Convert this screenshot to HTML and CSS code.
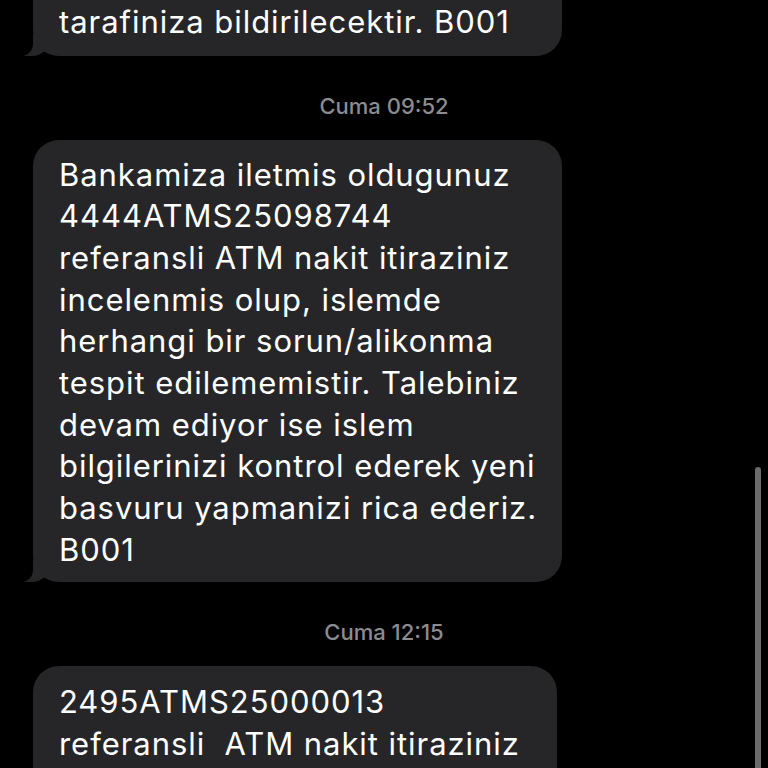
FILE: index.html
```html
<!DOCTYPE html>
<html lang="tr">
<head>
<meta charset="utf-8">
<title>Mesajlar</title>
<link rel="stylesheet" href="styles.css">
</head>
<body>
<main class="thread">
  <div class="bubble bubble--tail bubble--first">
    <span class="line">tarafiniza bildirilecektir. B001</span>
  </div>

  <div class="stamp">Cuma 09:52</div>

  <div class="bubble bubble--tail">
    <span class="line">Bankamiza iletmis oldugunuz</span>
    <span class="line">4444ATMS25098744</span>
    <span class="line">referansli ATM nakit itiraziniz</span>
    <span class="line">incelenmis olup, islemde</span>
    <span class="line">herhangi bir sorun/alikonma</span>
    <span class="line">tespit edilememistir. Talebiniz</span>
    <span class="line">devam ediyor ise islem</span>
    <span class="line">bilgilerinizi kontrol ederek yeni</span>
    <span class="line">basvuru yapmanizi rica ederiz.</span>
    <span class="line">B001</span>
  </div>

  <div class="stamp">Cuma 12:15</div>

  <div class="bubble bubble--narrow">
    <span class="line">2495ATMS25000013</span>
    <span class="line">referansli&nbsp; ATM nakit itiraziniz</span>
    <span class="line">incelenmis olup, islemde</span>
  </div>
</main>
<div class="scrollbar"></div>
</body>
</html>
```
FILE: styles.css
```css
html, body {
  margin: 0;
  padding: 0;
  background: #000;
  height: 100%;
  overflow: hidden;
}

body {
  font-family: Inter, "Noto Sans", "Liberation Sans", sans-serif;
  color: #fff;
}

.thread {
  display: flex;
  flex-direction: column;
  align-items: flex-start;
  padding-left: 33px;
}

.bubble {
  position: relative;
  box-sizing: border-box;
  width: 529px;
  background: #262628;
  border-radius: 26px;
  padding: 14px 20px 12px 26px;
  font-size: 31px;
  line-height: 41.67px;
  letter-spacing: 0.95px;
}

.bubble--first {
  margin-top: -59px;
  padding-top: 60px;
  padding-bottom: 13px;
}

.bubble--narrow {
  width: 524px;
  padding-top: 15px;
}

.line {
  display: block;
  white-space: nowrap;
}

.bubble--tail::before {
  content: "";
  position: absolute;
  left: -9px;
  bottom: 0;
  width: 24px;
  height: 22px;
  background: #262628;
  border-bottom-right-radius: 16px 14px;
}

.bubble--tail::after {
  content: "";
  position: absolute;
  left: -30px;
  bottom: 0;
  width: 30px;
  height: 24px;
  background: #000;
  border-bottom-right-radius: 12px;
}

.stamp {
  align-self: stretch;
  margin: 38px 0 22px -33px;
  text-align: center;
  color: #8c8c90;
  font-size: 22px;
  font-weight: 500;
  line-height: 24px;
}

.scrollbar {
  position: absolute;
  left: 755px;
  top: 467px;
  width: 6px;
  height: 320px;
  border-radius: 3px;
  background: #6b6b6b;
}
```
